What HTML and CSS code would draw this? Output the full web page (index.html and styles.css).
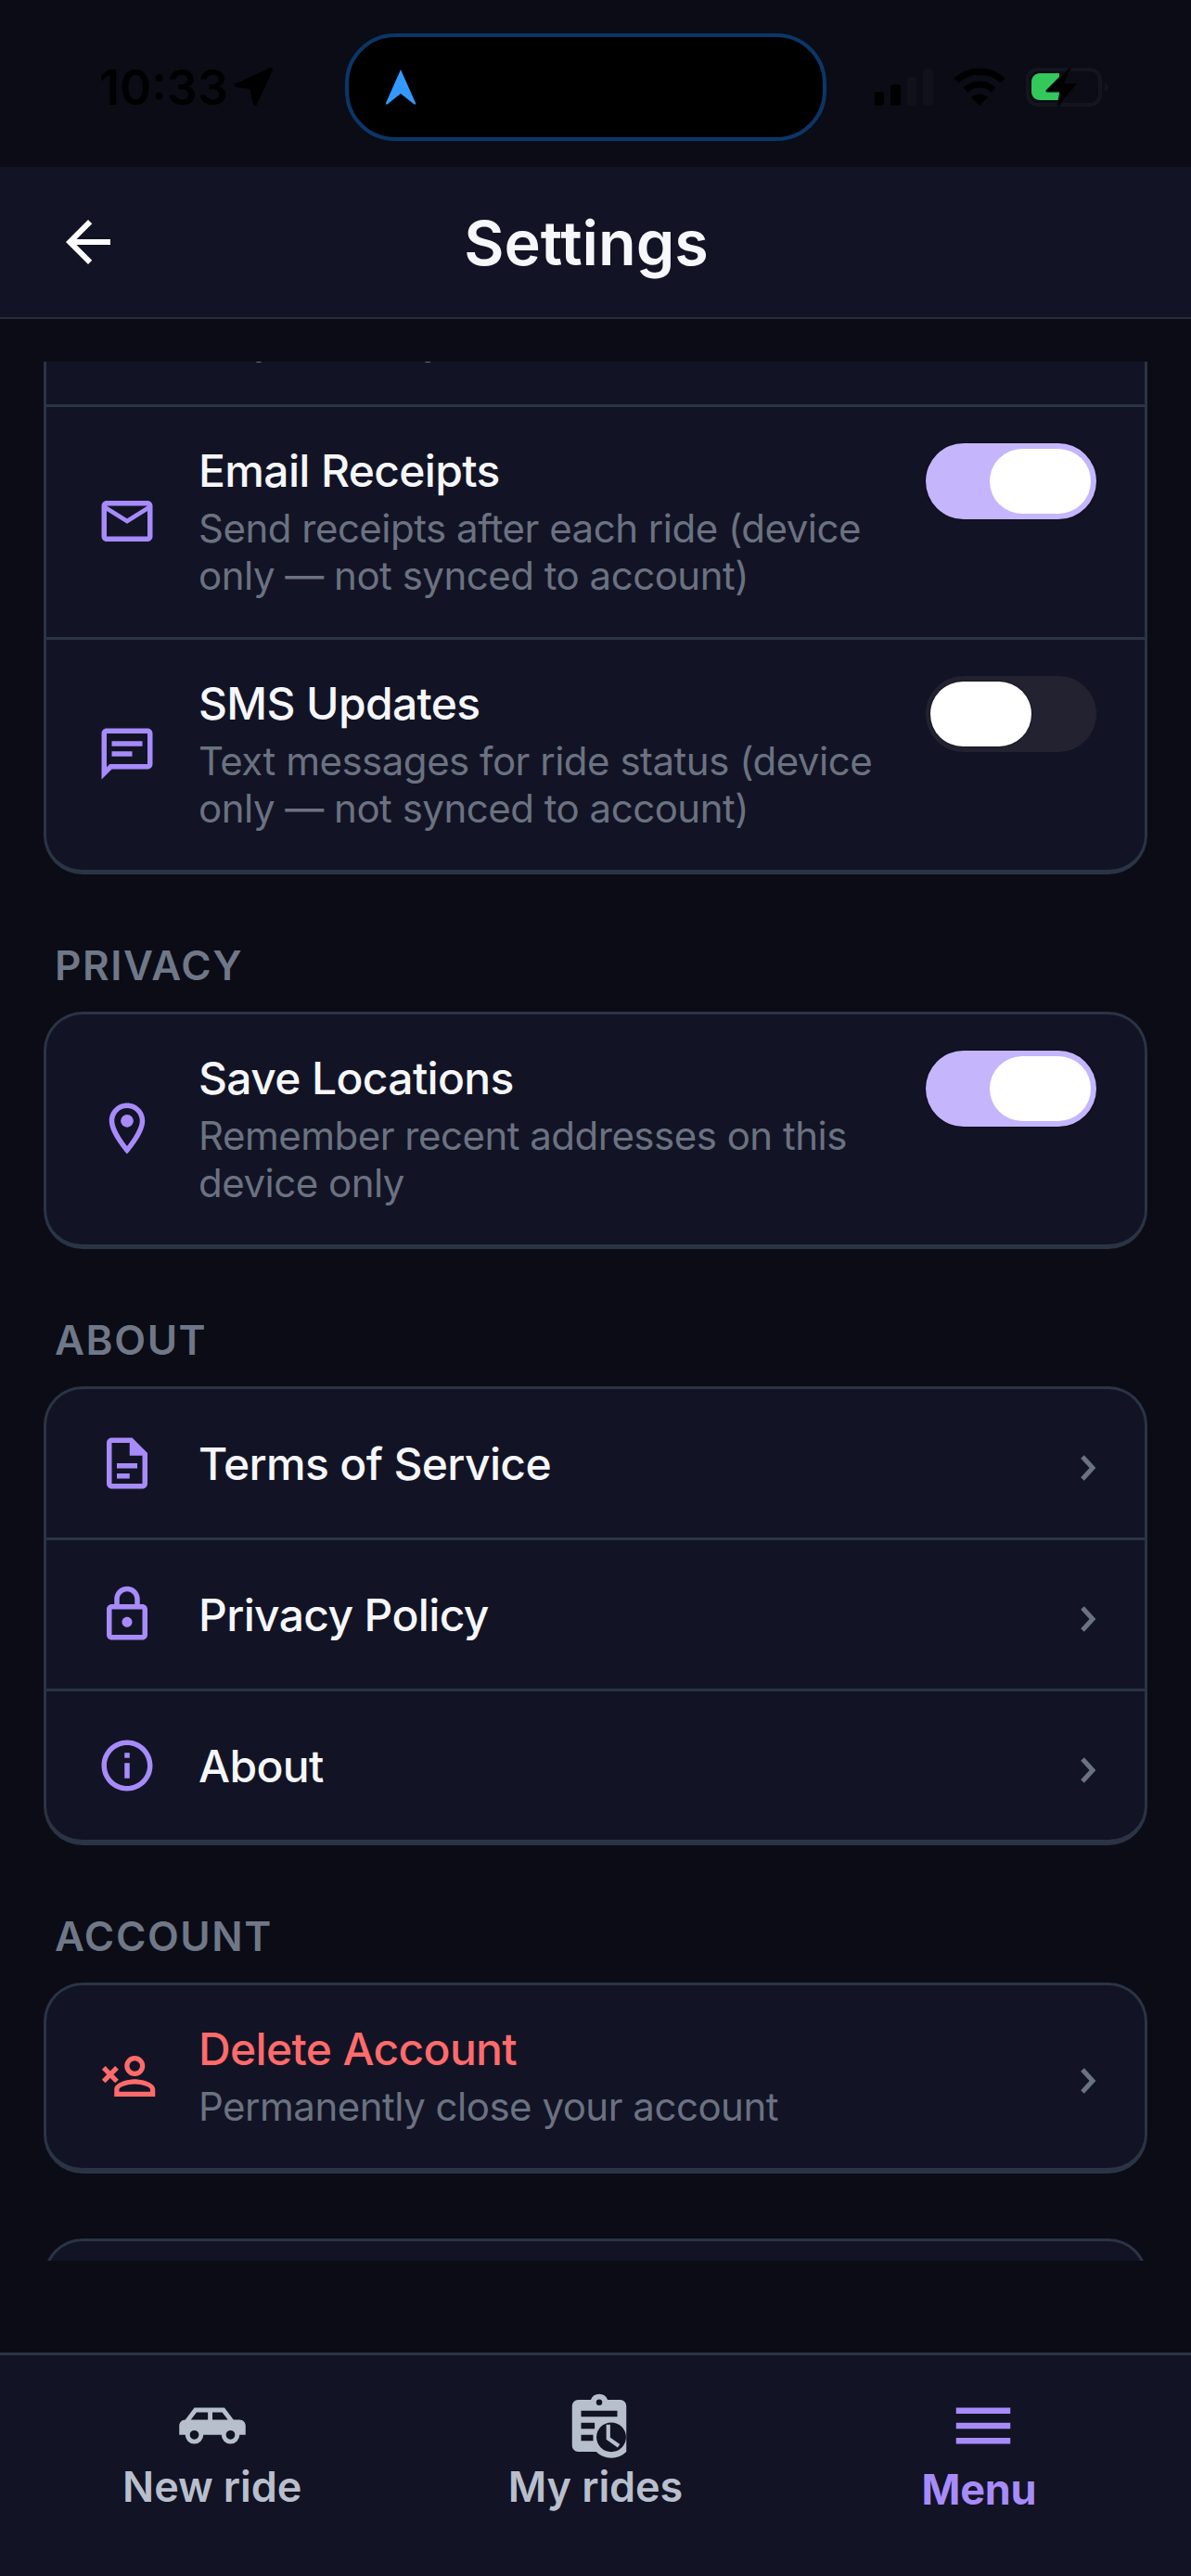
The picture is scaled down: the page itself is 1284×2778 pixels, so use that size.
FILE: index.html
```html
<!DOCTYPE html>
<html>
<head>
  <title>Settings</title>
  <link rel="stylesheet" href="styles.css">
</head>
<body>
  <div class="app">
    <div class="status-bar">
      <div class="status-left">
        <span class="time">10:33</span>
        <svg class="nav-arrow" viewBox="0 0 44 44"><path d="M41 3 4 20l16 2 4 18z"/></svg>
      </div>
      <div class="island">
        <svg class="island-arrow" viewBox="0 0 38 42"><path d="M19 2 3 38c-.6 1.4.6 2 1.8 1.2L19 28l14.2 11.2c1.2.8 2.4.2 1.8-1.2z"/></svg>
      </div>
      <div class="status-right">
        <svg class="signal" viewBox="0 0 64 40">
          <rect x="0" y="25" width="10" height="15" rx="3" fill="#000"/>
          <rect x="17" y="17" width="11" height="23" rx="3" fill="#000"/>
          <rect x="35" y="9" width="10" height="31" rx="3" fill="#10111a"/>
          <rect x="52" y="0" width="11" height="40" rx="3" fill="#10111a"/>
        </svg>
        <svg class="wifi" viewBox="0 0 56 40">
          <path d="M3 13A36 36 0 0 1 53 13" fill="none" stroke="#000" stroke-width="7"/>
          <path d="M13 23A22 22 0 0 1 43 23" fill="none" stroke="#000" stroke-width="7"/>
          <path d="M28 40 19 31A13 13 0 0 1 37 31z" fill="#000"/>
        </svg>
        <svg class="battery" viewBox="0 0 92 44">
          <rect x="3" y="3" width="78" height="38" rx="11" fill="none" stroke="#14151e" stroke-width="4"/>
          <path d="M86 17c3 1 4 3 4 5s-1 4-4 5z" fill="#14151e"/>
          <path d="M16 7h21v29H16c-5 0-9-4-9-9V16c0-5 4-9 9-9z" fill="#34c759"/>
          <path d="M49 1 24 26h15l-3 16 20-24H42z" fill="#000" stroke="#0b0c16" stroke-width="3" stroke-linejoin="round" paint-order="stroke"/>
        </svg>
      </div>
    </div>

    <header class="header">
      <svg class="back" viewBox="0 0 24 24"><path d="M20 11H7.83l5.59-5.59L12 4l-8 8 8 8 1.41-1.41L7.83 13H20v-2z"/></svg>
      <h1>Settings</h1>
    </header>

    <main class="main">
      <div class="scroll">
        <div class="card card-scrolled">
          <div class="row row-tail">
            <div class="row-text"><div class="row-sub">only — not synced to account)</div></div>
          </div>
          <div class="row">
            <svg class="icon" viewBox="0 0 24 24"><path d="M20 4H4c-1.1 0-1.99.9-1.99 2L2 18c0 1.1.9 2 2 2h16c1.1 0 2-.9 2-2V6c0-1.1-.9-2-2-2zm0 14H4V8l8 5 8-5v10zm-8-7L4 6h16l-8 5z"/></svg>
            <div class="row-text">
              <div class="row-title">Email Receipts</div>
              <div class="row-sub">Send receipts after each ride (device only — not synced to account)</div>
            </div>
            <div class="toggle toggle-on"><div class="thumb"></div></div>
          </div>
          <div class="row">
            <svg class="icon" viewBox="0 0 24 24"><path d="M20 2H4c-1.1 0-2 .9-2 2v18l4-4h14c1.1 0 2-.9 2-2V4c0-1.1-.9-2-2-2zm0 14H5.2L4 17.2V4h16v12zM6 7h12v2H6zm0 4h8v2H6z"/></svg>
            <div class="row-text">
              <div class="row-title">SMS Updates</div>
              <div class="row-sub">Text messages for ride status (device only — not synced to account)</div>
            </div>
            <div class="toggle"><div class="thumb"></div></div>
          </div>
        </div>

        <div class="section-title">PRIVACY</div>
        <div class="card">
          <div class="row">
            <svg class="icon" viewBox="0 0 24 24"><path d="M12 2C8.13 2 5 5.13 5 9c0 5.25 7 13 7 13s7-7.75 7-13c0-3.87-3.13-7-7-7zM7 9c0-2.76 2.24-5 5-5s5 2.24 5 5c0 2.88-2.88 7.19-5 9.88C9.92 16.21 7 11.85 7 9z"/><circle cx="12" cy="9" r="2.5"/></svg>
            <div class="row-text">
              <div class="row-title">Save Locations</div>
              <div class="row-sub">Remember recent addresses on this device only</div>
            </div>
            <div class="toggle toggle-on"><div class="thumb"></div></div>
          </div>
        </div>

        <div class="section-title">ABOUT</div>
        <div class="card card-thick">
          <div class="row row-link">
            <svg class="icon" viewBox="0 0 24 24"><path d="M14 2H6c-1.1 0-2 .9-2 2v16c0 1.1.9 2 2 2h12c1.1 0 2-.9 2-2V8l-6-6zM6 20V4h7v5h5v11H6zm2-8h8v2H8zm0 4h5v2H8z"/></svg>
            <div class="row-text"><div class="row-title">Terms of Service</div></div>
            <svg class="chevron" viewBox="0 0 18 28"><path d="M3 2 14 14 3 26"/></svg>
          </div>
          <div class="row row-link">
            <svg class="icon" viewBox="0 0 24 24"><path d="M18 8h-1V6c0-2.76-2.24-5-5-5S7 3.24 7 6v2H6c-1.1 0-2 .9-2 2v10c0 1.1.9 2 2 2h12c1.1 0 2-.9 2-2V10c0-1.1-.9-2-2-2zM9 6c0-1.66 1.34-3 3-3s3 1.34 3 3v2H9V6zm9 14H6V10h12v10zm-6-3c1.1 0 2-.9 2-2s-.9-2-2-2-2 .9-2 2 .9 2 2 2z"/></svg>
            <div class="row-text"><div class="row-title">Privacy Policy</div></div>
            <svg class="chevron" viewBox="0 0 18 28"><path d="M3 2 14 14 3 26"/></svg>
          </div>
          <div class="row row-link">
            <svg class="icon" viewBox="0 0 24 24"><path d="M11 7h2v2h-2zm0 4h2v6h-2zm1-9C6.48 2 2 6.48 2 12s4.48 10 10 10 10-4.48 10-10S17.52 2 12 2zm0 18c-4.41 0-8-3.59-8-8s3.59-8 8-8 8 3.59 8 8-3.59 8-8 8z"/></svg>
            <div class="row-text"><div class="row-title">About</div></div>
            <svg class="chevron" viewBox="0 0 18 28"><path d="M3 2 14 14 3 26"/></svg>
          </div>
        </div>

        <div class="section-title">ACCOUNT</div>
        <div class="card card-thick">
          <div class="row">
            <svg class="icon icon-danger" viewBox="0 0 24 24">
              <path fill-rule="evenodd" d="M15 4a4 4 0 1 0 0 8 4 4 0 0 0 0-8zm0 1.9a2.1 2.1 0 1 1 0 4.2 2.1 2.1 0 0 1 0-4.2zM15 13.2c-2.67 0-8 1.33-8 4V20h16v-2.8c0-2.67-5.33-4-8-4zM15 15.1c3 0 6.1 1.2 6.1 2.1v.9H8.900v-.9c0-.9 3.100-2.100 6.100-2.100z"/>
              <path d="M2.800 8.700 8 14M8 8.700 2.800 14" fill="none" stroke="#ff6b6b" stroke-width="1.900"/>
            </svg>
            <div class="row-text">
              <div class="row-title row-title-danger">Delete Account</div>
              <div class="row-sub">Permanently close your account</div>
            </div>
            <svg class="chevron" viewBox="0 0 18 28"><path d="M3 2 14 14 3 26"/></svg>
          </div>
        </div>

        <div class="card card-next"></div>
      </div>
    </main>

    <nav class="tabs">
      <div class="tab">
        <svg class="tab-icon" viewBox="0 0 24 24"><path d="M16 6l3 4h2c1.110 0 2 .89 2 2v3h-2a3 3 0 0 1-6 0H9a3 3 0 0 1-6 0H1v-3c0-1.110.89-2 2-2l3-4h10zm-5.500 1.500H6.750L4.860 10h5.640V7.500zm1.500 0V10h5.140l-1.890-2.500H12zM6 13.500a1.500 1.500 0 1 0 0 3 1.500 1.500 0 0 0 0-3zm12 0a1.500 1.500 0 1 0 0 3 1.500 1.500 0 0 0 0-3z"/></svg>
        <span class="tab-label">New ride</span>
      </div>
      <div class="tab">
        <svg class="tab-icon tab-icon-shift" viewBox="0 0 24 24">
          <path d="M5 3.400h4.200a3 3 0 0 1 5.600 0H19a2 2 0 0 1 2 2v15.200h-10H5a2 2 0 0 1-2-2V5.400a2 2 0 0 1 2-2z"/>
          <path d="M11 20.600A7 7 0 0 0 21 20.600z"/>
          <g class="tab-cut">
            <circle cx="12" cy="4.200" r="1"/>
            <rect x="6" y="7" width="12" height="2"/>
            <rect x="6" y="11" width="4.500" height="2"/>
            <rect x="6" y="15" width="4" height="2"/>
            <circle cx="16" cy="15.800" r="4.900"/>
          </g>
          <path d="M15 11.600v4.600l3.500 2.500" fill="none" stroke="#b8bfcc" stroke-width="1.300"/>
        </svg>
        <span class="tab-label">My rides</span>
      </div>
      <div class="tab tab-active">
        <svg class="tab-icon tab-icon-shift" viewBox="0 0 24 24"><path d="M3 18h18v-2H3v2zm0-5h18v-2H3v2zm0-7v2h18V6H3z"/></svg>
        <span class="tab-label">Menu</span>
      </div>
    </nav>
  </div>
</body>
</html>
```

FILE: styles.css
```css
* {
  box-sizing: border-box;
}

html, body {
  margin: 0;
  padding: 0;
}

body {
  font-family: Inter, "Noto Sans", sans-serif;
  background-color: #0b0c16;
  color: #f4f5fa;
}

.app {
  width: 1284px;
  height: 2778px;
  display: flex;
  flex-direction: column;
  overflow: hidden;
}

/* status bar */
.status-bar {
  height: 180px;
  flex: none;
  display: flex;
  align-items: center;
  padding: 8px 0 0 107px;
}

.status-left {
  width: 188px;
  display: flex;
  align-items: center;
  justify-content: space-between;
  margin-right: 77px;
}

.time {
  font-size: 52px;
  font-weight: 600;
  color: #000;
}

.nav-arrow {
  width: 44px;
  height: 44px;
  fill: #000;
  stroke: #000;
  stroke-width: 4;
  stroke-linejoin: round;
}

.island {
  width: 519px;
  height: 116px;
  flex: none;
  display: flex;
  align-items: center;
  padding-left: 37px;
  background-color: #000;
  border: 4px solid #0a3768;
  border-radius: 54px;
}

.island-arrow {
  width: 38px;
  height: 42px;
  fill: #3399ff;
}

.status-right {
  display: flex;
  align-items: center;
  margin-left: 52px;
}

.signal {
  width: 64px;
  height: 40px;
  margin-right: 21px;
}

.wifi {
  width: 56px;
  height: 40px;
  margin-right: 21px;
}

.battery {
  width: 92px;
  height: 44px;
}

/* header */
.header {
  height: 164px;
  flex: none;
  display: grid;
  grid-template-columns: 1fr auto 1fr;
  align-items: center;
  padding: 0 79px 0 59px;
  background-color: #121324;
  border-bottom: 2px solid #262b3a;
}

.back {
  width: 72px;
  height: 72px;
  fill: #fff;
}

h1 {
  margin: 2px 0 0;
  font-size: 66.500px;
  line-height: 80px;
  font-weight: 600;
  color: #f6f7fb;
}

/* scrolling part */
.main {
  flex: 1;
  padding-top: 46px;
  min-height: 0;
}

.scroll {
  height: 2048px;
  padding: 0 47px;
  overflow: hidden;
}

.card {
  background-color: #121425;
  border: 3px solid #2a3444;
  border-bottom-width: 5px;
  border-radius: 42px;
  overflow: hidden;
}

.card-thick {
  border-bottom-width: 6px;
}

.card-scrolled {
  margin-top: -52px;
}

.card-next {
  height: 120px;
  margin-top: 70px;
}

.section-title {
  margin: 72px 0 24px 12px;
  font-size: 44px;
  line-height: 52px;
  font-weight: 600;
  letter-spacing: 1.6px;
  color: #6f7888;
}

.row {
  display: flex;
  align-items: center;
  padding: 39px 52px 41px 54px;
}

.row + .row {
  border-top: 3px solid #2a3444;
}

.row-link {
  padding-top: 47px;
  padding-bottom: 47px;
}

.row-link .row-title {
  margin-top: 2px;
}

.row-tail {
  padding-top: 0;
  padding-bottom: 44px;
}

.icon {
  width: 66px;
  height: 66px;
  flex: none;
  margin-right: 44px;
  fill: #a78bfa;
}

.icon-danger {
  fill: #ff6b6b;
}

.row-text {
  flex: 1;
  min-width: 0;
  padding-right: 30px;
}

.row-tail .row-text {
  padding-left: 110px;
}

.row-title {
  font-size: 48px;
  line-height: 60px;
  font-weight: 500;
  letter-spacing: -0.65px;
  color: #f6f7fb;
}

.row-title-danger {
  color: #ff6b6b;
}

.row-sub {
  margin-top: 6px;
  font-size: 42px;
  line-height: 51px;
  letter-spacing: -0.5px;
  color: #6b7280;
}

.row-tail .row-sub {
  margin-top: 0;
}

.toggle {
  width: 184px;
  height: 82px;
  flex: none;
  align-self: flex-start;
  display: flex;
  padding: 6px 5px;
  background-color: #232230;
  border-radius: 41px;
}

.toggle-on {
  justify-content: flex-end;
  padding: 6px;
  background-color: #c4b5fd;
  box-shadow: 0 0 2px #000;
}

.thumb {
  width: 109px;
  height: 70px;
  background-color: #fff;
  border-radius: 35px;
  box-shadow: 0 0 2px #000;
}

.toggle-on .thumb {
  box-shadow: none;
}

.chevron {
  width: 18px;
  height: 28px;
  flex: none;
  margin-top: 10px;
  fill: none;
  stroke: #6b7280;
  stroke-width: 5;
}

/* bottom tabs */
.tabs {
  height: 241px;
  flex: none;
  display: flex;
  padding: 37px 22px 0;
  background-color: #121324;
  border-top: 3px solid #2a3444;
}

.tab {
  flex: 1;
  display: flex;
  flex-direction: column;
  align-items: center;
  color: #b8bfcc;
}

.tab-icon {
  width: 78px;
  height: 78px;
  fill: #b8bfcc;
}

.tab-icon-shift {
  margin-left: 9px;
}

.tab-cut {
  fill: #121324;
}

.tab-label {
  font-size: 45px;
  line-height: 54px;
  font-weight: 600;
  letter-spacing: -0.1px;
}

.tab-active {
  color: #a78bfa;
}

.tab-active .tab-icon {
  fill: #a78bfa;
}

.tab-active .tab-label {
  margin-top: 3px;
  font-weight: 700;
  letter-spacing: -0.3px;
}
```
